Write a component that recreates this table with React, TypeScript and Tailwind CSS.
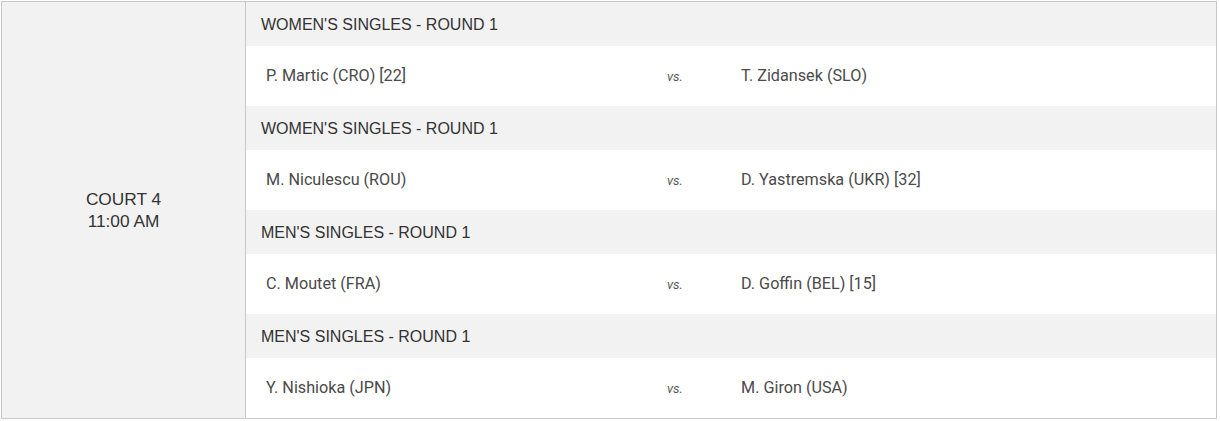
import React from 'react';

type Match = {
  event: string;
  home: string;
  away: string;
};

const MATCHES: Match[] = [
  { event: "WOMEN'S SINGLES - ROUND 1", home: 'P. Martic (CRO) [22]', away: 'T. Zidansek (SLO)' },
  { event: "WOMEN'S SINGLES - ROUND 1", home: 'M. Niculescu (ROU)', away: 'D. Yastremska (UKR) [32]' },
  { event: "MEN'S SINGLES - ROUND 1", home: 'C. Moutet (FRA)', away: 'D. Goffin (BEL) [15]' },
  { event: "MEN'S SINGLES - ROUND 1", home: 'Y. Nishioka (JPN)', away: 'M. Giron (USA)' },
];

export default function App() {
  return (
    <div className="bg-white w-[1220px] h-[421px] pt-px pl-px">
      <div className="flex w-[1216px] h-[418px] border border-[#c8c8c8] bg-white">
        {/* court + start time */}
        <div className="w-[244px] shrink-0 border-r border-[#c8c8c8] bg-[#f2f2f2] flex flex-col items-center justify-center text-center text-[17.3px] leading-[22px] text-[#333] font-['Liberation_Sans',Arial,sans-serif]">
          <span>COURT 4</span>
          <span>11:00 AM</span>
        </div>

        <div className="flex-1 flex flex-col">
          {MATCHES.map((m, i) => (
            <div key={i}>
              <div className="h-[44px] pt-[2px] flex items-center pl-[15px] bg-[#f2f2f2] text-[16px] text-[#333] font-['Liberation_Sans',Arial,sans-serif]">
                {m.event}
              </div>
              <div className="h-[60px] pt-px grid grid-cols-[421px_74px_1fr] items-center text-[16.2px] text-[#4a4a4a] font-['Roboto',sans-serif]">
                <span className="pl-5">{m.home}</span>
                <span className="italic text-[13px] text-[#555]">vs.</span>
                <span>{m.away}</span>
              </div>
            </div>
          ))}
        </div>
      </div>
    </div>
  );
}
